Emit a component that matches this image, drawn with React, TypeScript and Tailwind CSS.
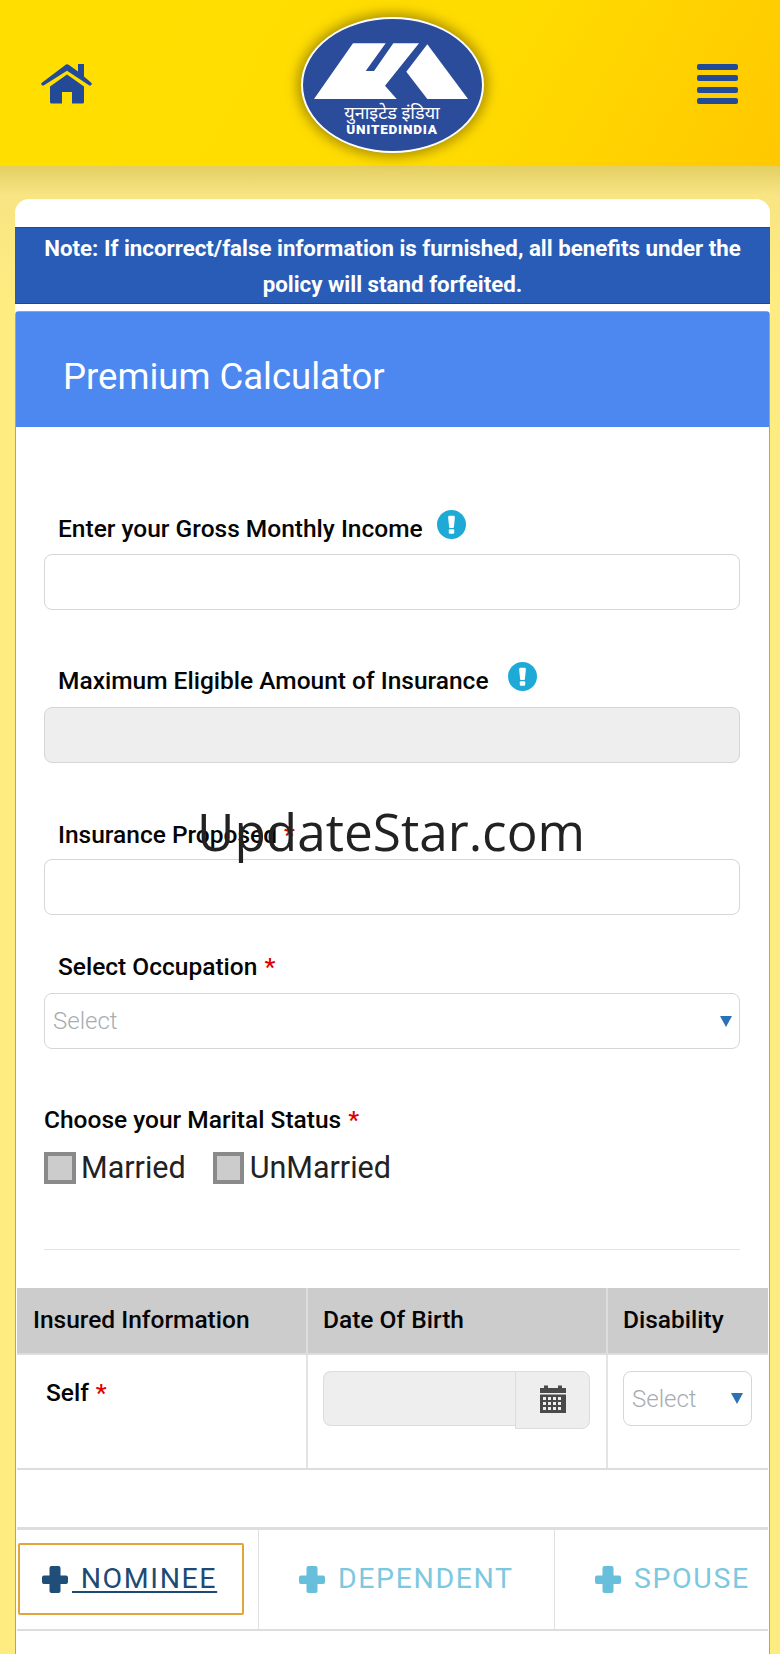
import React from "react";

const roboto = "font-['Roboto','Liberation_Sans',sans-serif]";

function Req() {
  return <span className="text-[#e00000] ml-[7px]">*</span>;
}

function Label({ children }: { children: React.ReactNode }) {
  return (
    <div className="h-[34px] pl-[14px] text-[24.5px] leading-[34px] font-medium text-[#050505] whitespace-nowrap">
      {children}
    </div>
  );
}

function Info({ className }: { className: string }) {
  return (
    <svg viewBox="0 0 30 30" className={"w-[29px] h-[29px] " + className}>
      <circle cx="15" cy="15" r="15" fill="#1eaad6" />
      <path d="M11.500 7.500a1.500 1.500 0 0 1 1.500-1.500h4a1.500 1.500 0 0 1 1.500 1.500L17.500 17.500a1 1 0 0 1-1 1h-3a1 1 0 0 1-1-1z" fill="#fff" />
      <rect x="12.200" y="20" width="5.600" height="4.500" rx="1" fill="#fff" />
    </svg>
  );
}

function Input({ className = "" }: { className?: string }) {
  return <div className={"h-[56px] rounded-[8px] border-[1.500px] border-[#d6d6d6] " + className} />;
}

function Plus({ color }: { color: string }) {
  return (
    <svg viewBox="0 0 26 27" className="w-[26px] h-[27px] shrink-0">
      <path d="M7.500 2a2 2 0 0 1 2-2h7a2 2 0 0 1 2 2v7.500H24a2 2 0 0 1 2 2v4.500a2 2 0 0 1-2 2h-5.500V25a2 2 0 0 1-2 2h-7a2 2 0 0 1-2-2v-7H2a2 2 0 0 1-2-2v-4.500a2 2 0 0 1 2-2h5.500z" fill={color} />
    </svg>
  );
}

function Logo() {
  return (
    <div className="relative ml-[-5px] mt-[4px] w-[183px] h-[136px] rounded-[50%] bg-[#2a4c9b] border-[2.5px] border-white shadow-[0_0_12px_4px_rgba(110,90,0,0.55)] overflow-hidden">
      <svg viewBox="301 17 183 136" className="absolute left-[-2.5px] top-[-2.5px] w-[183px] h-[136px]">
        <path d="M315 99 L354 43.300 L386.700 43.300 L366.700 71 L375 71 L394.300 43.300 L420 43.300 L386 85.700 L397.700 99 Z" fill="#fff" />
        <path d="M428.300 44.300 L469 99 L428.300 99 L407.300 71.700 Z" fill="#fff" />
      </svg>
      <div className="absolute left-0 right-0 top-[82px] text-center text-white text-[18px] leading-[22px] font-['Noto_Sans','DejaVu_Sans',sans-serif]">युनाइटेड इंडिया</div>
      <div className="absolute left-0 right-0 top-[102px] text-center text-white text-[13.500px] leading-[16px] font-black tracking-[0.800px] font-['Roboto',sans-serif]">UNITEDINDIA</div>
    </div>
  );
}

export default function App() {
  return (
    <div className={"relative w-[780px] h-[1654px] overflow-hidden bg-[linear-gradient(180deg,#e4cf63_166px,#f8e583_195px,#ffec80_300px)] " + roboto}>
      <header className="h-[166px] flex items-center justify-between pl-[41px] pr-[42px] bg-[linear-gradient(120deg,#ffdf00_0%,#ffdc00_60%,#ffc800_100%)]">
        <svg viewBox="0 0 51 40" className="w-[51px] h-[40px] mt-[2px] text-[#234a96]">
          <path d="M25 .5 Q26.500 0 28 1 L37 7.500 V0 H43 V12.500 L50.500 19 Q51.300 20 50 21.200 Q49 22 48 21.300 L26 6.800 L3 21.300 Q2 22 1 21.200 Q-.300 20 .500 19 Z" fill="currentColor" />
          <path d="M26 10.500 L43 22.500 V38 Q43 39.500 41.500 39.500 H31 V28 H21 V39.500 H10.500 Q9 39.500 9 38 V22.500 Z" fill="currentColor" />
        </svg>
        <Logo />
        <div className="w-[41px] flex flex-col gap-[5.300px] mt-[2px]">
          <div className="h-[6px] rounded-[2px] bg-[#234a96]" />
          <div className="h-[6px] rounded-[2px] bg-[#234a96]" />
          <div className="h-[6px] rounded-[2px] bg-[#234a96]" />
          <div className="h-[6px] rounded-[2px] bg-[#234a96]" />
        </div>
      </header>

      <main className="mt-[33px] mx-[15px] w-[755px] h-[1455px] bg-white rounded-t-[14px] pt-[28px]">
        <div className="h-[77px] bg-[#285cb6] border-y border-[#1c4a96] text-white text-center text-[22.300px] font-bold leading-[36px] pt-[2px]">
          Note: If incorrect/false information is furnished, all benefits under the
          <br />
          policy will stand forfeited.
        </div>
        <section className="mt-[7px] h-[1350px] border-x-[1.500px] border-t-[1.500px] border-[#86a8d6] rounded-t-[4px]">
          <div className="h-[115px] bg-[#4c88ef] flex items-center pl-[47px] pt-[15px] text-white text-[36.500px]">Premium Calculator</div>

          <div className="pl-[28px] pr-[29px]">
            <div className="pt-[85px]">
              <div className="relative">
                <Label>Enter your Gross Monthly Income</Label>
                <Info className="absolute left-[392.500px] top-[-2px]" />
              </div>
              <Input className="mt-[8px]" />
            </div>
            <div className="pt-[54px]">
              <div className="relative">
                <Label>Maximum Eligible Amount of Insurance</Label>
                <Info className="absolute left-[463.500px] top-[-2px]" />
              </div>
              <Input className="mt-[9px] bg-[#eeeeee]" />
            </div>
            <div className="pt-[55px]">
              <Label>Insurance Proposed<Req /></Label>
              <Input className="mt-[7px]" />
            </div>
            <div className="pt-[35px]">
              <Label>Select Occupation<Req /></Label>
              <div className="mt-[9px] h-[56px] rounded-[8px] border-[1.500px] border-[#d6d6d6] flex items-center justify-between pl-[8px] pr-[7px]">
                <span className="text-[24px] font-light text-[#a6acb0]">Select</span>
                <span className="w-0 h-0 border-x-[6px] border-x-transparent border-t-[11px] border-t-[#2a72b5]" />
              </div>
            </div>
            <div className="pt-[54px] text-[24.500px] leading-[34px] font-medium text-[#050505]">
              Choose your Marital Status<Req />
            </div>
            <div className="mt-[15px] flex items-center h-[32px] text-[30.500px] text-[#222]">
              <span className="w-[32px] h-[32px] border-[4px] border-[#8a8a8a] bg-[#cccccc]" />
              <span className="ml-[5px]">Married</span>
              <span className="ml-[27px] w-[31px] h-[32px] border-[4px] border-[#8a8a8a] bg-[#cccccc]" />
              <span className="ml-[6px]">UnMarried</span>
            </div>
            <div className="mt-[65px] h-px bg-[#e3e3e3]" />
          </div>

          <div className="mt-[38px] mx-px">
            <div className="h-[67px] grid grid-cols-[291px_300px_1fr] bg-[#cccccc] border-b-2 border-[#dddddd] text-[24.500px] font-medium text-[#050505] leading-[64px]">
              <div className="pl-[16px] border-r-2 border-[#dddddd]">Insured Information</div>
              <div className="pl-[15px] border-r-2 border-[#dddddd]">Date Of Birth</div>
              <div className="pl-[15px]">Disability</div>
            </div>
            <div className="h-[115px] grid grid-cols-[291px_300px_1fr] border-b-2 border-[#dddddd]">
              <div className="pl-[29px] pt-[21px] border-r-2 border-[#e4e4e4] text-[24.500px] leading-[34px] font-medium text-[#050505]">Self<Req /></div>
              <div className="pl-[15px] pt-[16px] border-r-2 border-[#e4e4e4]">
                <div className="flex w-[267px]">
                  <div className="w-[192px] h-[55px] bg-[#eeeeee] rounded-l-[8px] border-[1.500px] border-r-0 border-[#dcdcdc]" />
                  <div className="w-[75px] h-[58px] bg-[#eeeeee] rounded-r-[8px] border-[1.500px] border-[#dcdcdc] flex items-center justify-center pb-[3px]">
                    <svg viewBox="0 0 26 29" className="w-[26px] h-[29px]">
                      <path d="M0 4h4V1.500h4V4h10V1.500h4V4h4v5H0z" fill="#4a4a4a" />
                      <path fillRule="evenodd" d="M0 10.500h26V29H0z M3 13v3h3v-3z M8 13v3h3v-3z M13 13v3h3v-3z M18 13v3h3v-3z M3 18v3h3v-3z M8 18v3h3v-3z M13 18v3h3v-3z M18 18v3h3v-3z M3 23v3h3v-3z M8 23v3h3v-3z M13 23v3h3v-3z M18 23v3h3v-3z" fill="#4a4a4a" />
                    </svg>
                  </div>
                </div>
              </div>
              <div className="pl-[15px] pt-[16px]">
                <div className="w-[129px] h-[55px] rounded-[8px] border-[1.500px] border-[#d6d6d6] flex items-center justify-between pl-[8px] pr-[8px]">
                  <span className="text-[24px] font-light text-[#a6acb0]">Select</span>
                  <span className="w-0 h-0 border-x-[6px] border-x-transparent border-t-[11px] border-t-[#2a72b5]" />
                </div>
              </div>
            </div>
          </div>

          <div className="mt-[57px] mx-px h-[104px] border-t-[3px] border-b-2 border-[#dddddd] flex">
            <div className="w-[242px] border-r border-[#e0e0e0] pl-px pt-[13px]">
              <div className="w-[226px] h-[72px] border-2 border-[#e0a63c] rounded-[2px] flex items-center pl-[22px] text-[28.500px] tracking-[1.600px] text-[#1d4a75]">
                <Plus color="#1f4e79" />
                <span className="ml-[4px] underline underline-offset-[3px] whitespace-pre"> NOMINEE</span>
              </div>
            </div>
            <div className="w-[296px] border-r border-[#e0e0e0] flex items-center pl-[40px] text-[28.500px] tracking-[1.600px] text-[#7cc8e0]">
              <Plus color="#68bfdc" />
              <span className="ml-[13px]">DEPENDENT</span>
            </div>
            <div className="flex-1 flex items-center pl-[40px] text-[28.500px] tracking-[1.600px] text-[#7cc8e0]">
              <Plus color="#68bfdc" />
              <span className="ml-[13px]">SPOUSE</span>
            </div>
          </div>
        </section>
      </main>

      <div className="absolute left-[197px] top-[789px] text-[51.300px] leading-[84px] text-[#222] font-['Open_Sans',sans-serif] whitespace-nowrap">UpdateStar.com</div>
    </div>
  );
}
